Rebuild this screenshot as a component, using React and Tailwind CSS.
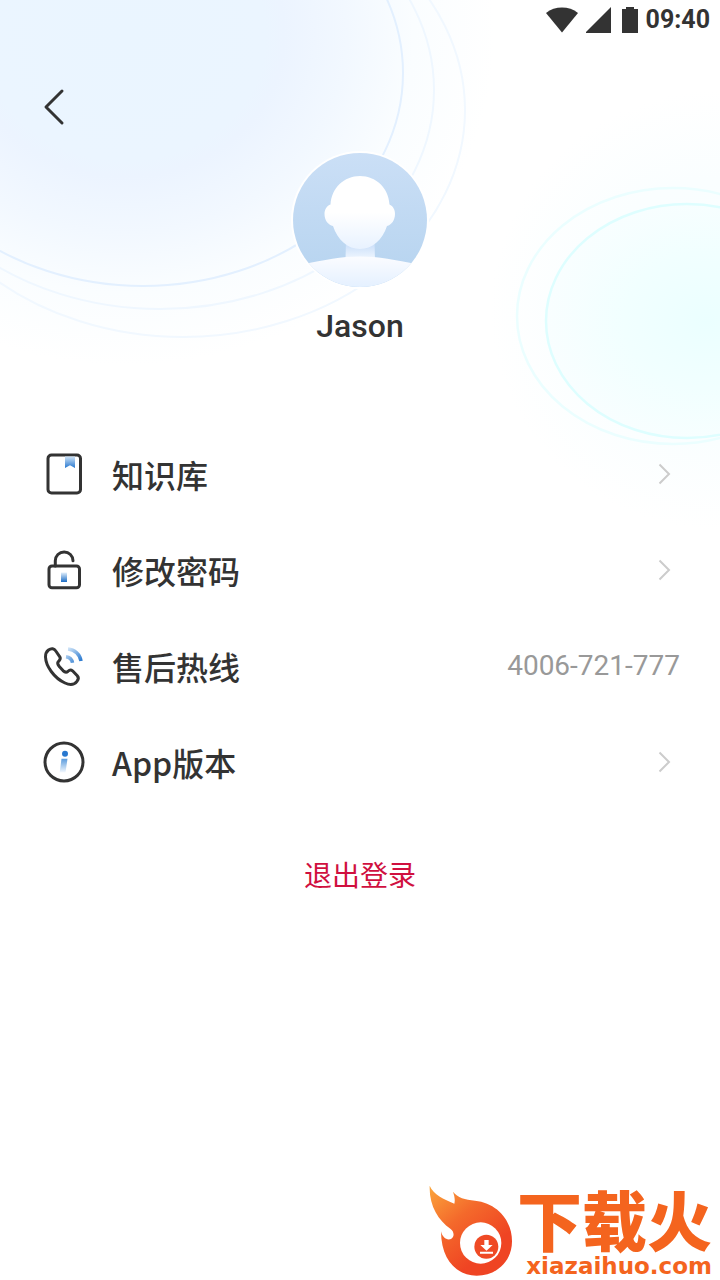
import { useId } from 'react';

function Backdrop() {
  return (
    <svg
      className="pointer-events-none absolute inset-x-0 top-0 -z-10 w-full"
      viewBox="0 0 720 620"
      fill="none"
      aria-hidden="true"
    >
      <defs>
        <radialGradient id="blueGlow">
          <stop offset="0" stopColor="#eaf5ff" />
          <stop offset="0.38" stopColor="#ebf5ff" />
          <stop offset="0.43" stopColor="#ecf4ff" />
          <stop offset="0.6" stopColor="#f2f8ff" />
          <stop offset="0.78" stopColor="#fafdff" />
          <stop offset="1" stopColor="#ffffff" />
        </radialGradient>
        <radialGradient id="cyanHaze">
          <stop offset="0" stopColor="#f8feff" />
          <stop offset="0.6" stopColor="#fafeff" />
          <stop offset="1" stopColor="#ffffff" />
        </radialGradient>
        <radialGradient id="cyanGlow" cx="0.57" cy="0.5" r="0.58">
          <stop offset="0" stopColor="#ebffff" />
          <stop offset="0.5" stopColor="#f1ffff" />
          <stop offset="1" stopColor="#f9feff" />
        </radialGradient>
      </defs>
      <ellipse cx="125" cy="35" rx="370" ry="330" fill="url(#blueGlow)" />
      <ellipse cx="143" cy="73" rx="260" ry="213" stroke="#e3f0ff" strokeWidth="2" />
      <ellipse cx="160" cy="90" rx="274" ry="219" stroke="#eff7ff" strokeWidth="2" />
      <ellipse cx="183" cy="110" rx="282" ry="227" stroke="#f1f8ff" strokeWidth="2" />
      <ellipse cx="720" cy="310" rx="230" ry="220" fill="url(#cyanHaze)" />
      <ellipse cx="673" cy="316" rx="156" ry="128" stroke="#ebfeff" strokeWidth="2.5" />
      <ellipse cx="687" cy="321" rx="141" ry="117" fill="url(#cyanGlow)" stroke="#defeff" strokeWidth="2.5" />
    </svg>
  );
}

function StatusBar() {
  return (
    <div className="flex h-10 items-center justify-end gap-2 pr-2.5 text-[#333333]">
      <svg width="32" height="26" viewBox="0 0 32 26" fill="currentColor" aria-hidden="true">
        <path d="M0 6C9 -1.3 23 -1.3 32 6L16 25.5Z" />
      </svg>
      <svg width="28" height="26" viewBox="0 0 28 26" fill="currentColor" aria-hidden="true">
        <path d="M25 0V26H-1Z" />
      </svg>
      <svg width="16" height="26" viewBox="0 0 16 26" fill="currentColor" aria-hidden="true">
        <path d="M4 0H12V2H16V26H0V2H4Z" />
      </svg>
      <span className="text-[25px] font-bold">09:40</span>
    </div>
  );
}

function Avatar() {
  return (
    <svg width="140" height="140" viewBox="0 0 140 140" role="img" aria-label="Jason">
      <defs>
        <linearGradient id="avatarBg" x1="0" y1="0" x2="0" y2="1">
          <stop offset="0" stopColor="#cbdff6" />
          <stop offset="1" stopColor="#b5d3ef" />
        </linearGradient>
        <linearGradient id="avatarHead" x1="0" y1="0" x2="0" y2="1">
          <stop offset="0.5" stopColor="#ffffff" />
          <stop offset="1" stopColor="#e8f2ff" />
        </linearGradient>
        <linearGradient id="avatarNeck" x1="0" y1="0" x2="0" y2="1">
          <stop offset="0.3" stopColor="#cfe2fa" />
          <stop offset="1" stopColor="#f2f8ff" />
        </linearGradient>
        <linearGradient id="avatarBody" x1="0" y1="0" x2="0" y2="1">
          <stop offset="0" stopColor="#fbfcff" />
          <stop offset="1" stopColor="#e2efff" />
        </linearGradient>
        <clipPath id="avatarClip">
          <circle cx="70" cy="70" r="67" />
        </clipPath>
      </defs>
      <circle cx="70" cy="70" r="69" fill="#ffffff" />
      <g clipPath="url(#avatarClip)">
        <rect width="140" height="140" fill="url(#avatarBg)" />
        <path d="M56 90H84.500L85 110H55.500Z" fill="url(#avatarNeck)" />
        <path d="M0 117C30 111 48 106.500 70 106.500C92 106.500 110 111 140 117V140H0Z" fill="url(#avatarBody)" />
        <path
          d="M40.500 54.500C41.500 38 54 26 70 26C86 26 98.500 38 99.500 54.500C103 56 105 59.500 105 64C105 70 101.500 75 97 76C92.500 90 82 99 70 99C58 99 47.500 90 43 76C38 75 34.500 70 34.500 64C34.500 59.500 37 55.500 40.500 54.500Z"
          fill="url(#avatarHead)"
        />
      </g>
    </svg>
  );
}

function IconFrame({ children }) {
  return (
    <svg
      className="shrink-0"
      width="48"
      height="48"
      viewBox="0 0 48 48"
      fill="none"
      stroke="#333333"
      strokeWidth="3"
      strokeLinecap="round"
      strokeLinejoin="round"
      aria-hidden="true"
    >
      {children}
    </svg>
  );
}

function Fade({ id, from = '#cfe4f8', to = '#2878cf' }) {
  return (
    <defs>
      <linearGradient id={id} x1="0" y1="0" x2="0" y2="1">
        <stop offset="0" stopColor={from} />
        <stop offset="1" stopColor={to} />
      </linearGradient>
    </defs>
  );
}

function BookIcon() {
  const id = useId();
  return (
    <IconFrame>
      <Fade id={id} />
      <rect x="8" y="5" width="32.500" height="38" rx="3.500" />
      <path d="M25 6.500H35V18L30 15.200L25 18Z" fill={`url(#${id})`} stroke="none" />
    </IconFrame>
  );
}

function LockIcon() {
  const id = useId();
  return (
    <IconFrame>
      <Fade id={id} from="#e2effb" to="#1b6cc4" />
      <path d="M15.300 20V14.800A8.850 8.850 0 0 1 33 14.800" />
      <rect x="9" y="20" width="30.500" height="21.800" rx="3" />
      <rect x="21" y="26.500" width="6" height="9.500" fill={`url(#${id})`} stroke="none" />
    </IconFrame>
  );
}

function PhoneIcon() {
  const id = useId();
  return (
    <IconFrame>
      <defs>
        <linearGradient id={id} gradientUnits="userSpaceOnUse" x1="28" y1="6" x2="40" y2="20">
          <stop offset="0" stopColor="#d3e6f8" />
          <stop offset="1" stopColor="#2878cf" />
        </linearGradient>
      </defs>
      <path d="M8.500 8C11.500 5.800 14.200 6.500 15.800 9L19.800 14.800C21.300 17.300 19.500 18.300 18.200 19.700C16.800 21.500 18 23 19.500 24.800L23 28.600C25 30.600 26.500 30.600 28 29.300C29.500 27.800 31 27.500 32.500 28.800L37.300 33.800C38.800 35.500 38.500 37.500 37 39.300C34.500 42.500 30 43.300 25 41C14 36 5.800 24 5.500 15C5.400 12 6.500 9.500 8.500 8Z" />
      <path d="M28 7A14 14 0 0 1 41 19" stroke={`url(#${id})`} strokeWidth="3.5" strokeLinecap="butt" />
      <path d="M26 14.700A7.500 7.500 0 0 1 32.500 20.800" stroke={`url(#${id})`} strokeWidth="3.5" strokeLinecap="butt" />
    </IconFrame>
  );
}

function InfoIcon() {
  const id = useId();
  return (
    <IconFrame>
      <Fade id={id} from="#5a9bdd" to="#f4f9fe" />
      <circle cx="24" cy="24" r="19" />
      <circle cx="25" cy="15.800" r="3" fill="#2878cf" stroke="none" />
      <path d="M21.500 20.700H27.500L25.500 34.500H19.700Z" fill={`url(#${id})`} stroke="none" />
    </IconFrame>
  );
}

function ChevronRight() {
  return (
    <svg width="32" height="32" viewBox="0 0 32 32" fill="none" stroke="#cccccc" strokeWidth="2" aria-hidden="true">
      <path d="M11.500 6.500L21 16L11.500 25.500" />
    </svg>
  );
}

const menu = [
  { label: '知识库', Icon: BookIcon },
  { label: '修改密码', Icon: LockIcon },
  { label: '售后热线', Icon: PhoneIcon, value: '4006-721-777' },
  { label: 'App版本', Icon: InfoIcon },
];

function MenuRow({ label, Icon, value }) {
  return (
    <li>
      <button type="button" className="flex h-24 w-full items-center gap-6 px-10 text-left">
        <Icon />
        <span className="flex-1 font-['Noto_Sans_CJK_SC',sans-serif] text-[32px] leading-10 font-medium">{label}</span>
        {value ? <span className="text-[28px] text-[#999999]">{value}</span> : <ChevronRight />}
      </button>
    </li>
  );
}

function SiteMark() {
  return (
    <div className="flex items-end justify-end gap-1 pr-2 pb-1 font-['Noto_Sans_CJK_SC',sans-serif] text-[#f4641e]">
      <svg width="84" height="91" viewBox="22 16 252 273" aria-hidden="true">
        <defs>
          <linearGradient id="flame" x1="0" y1="0" x2="0.6" y2="0.8">
            <stop offset="0" stopColor="#fba63c" />
            <stop offset="0.5" stopColor="#f4692b" />
            <stop offset="1" stopColor="#ef4423" />
          </linearGradient>
        </defs>
        <path
          d="M24 18C36 46 66 58 98 72C101 60 98 48 94 36C108 54 130 60 160 63C225 70 271 120 271 185C271 245 225 288 165 288C105 288 58 240 58 155C62 174 76 183 88 178C100 172 97 154 86 147C50 122 22 78 24 18Z"
          fill="url(#flame)"
        />
        <circle cx="177" cy="190" r="62" fill="#ffffff" />
        <circle cx="194" cy="201" r="36" fill="#ef4a25" />
        <path d="M188 181H201V196H213L194.500 213L176 196H188ZM175 216H214V222H175Z" fill="#ffffff" />
      </svg>
      <div className="flex flex-col items-end">
        <span className="text-[65px] leading-[76px] font-black">下载火</span>
        <span className="font-['DejaVu_Sans',sans-serif] text-[23px] leading-5 font-bold">xiazaihuo.com</span>
      </div>
    </div>
  );
}

export default function App() {
  return (
    <div className="relative isolate flex min-h-screen flex-col bg-white font-['Roboto','Noto_Sans_CJK_SC',sans-serif] text-[#333333]">
      <Backdrop />
      <StatusBar />

      <header className="flex h-[110px] items-start px-8 pt-11">
        <button type="button" aria-label="返回" className="flex size-11 items-center justify-center">
          <svg width="44" height="44" viewBox="0 0 44 44" fill="none" stroke="#333333" strokeWidth="3" strokeLinecap="round" strokeLinejoin="round">
            <path d="M30 7L14 23L30 39" />
          </svg>
        </button>
      </header>

      <main className="flex flex-col">
        <div className="flex flex-col items-center gap-4">
          <Avatar />
          <h1 className="text-[32px] leading-10 font-medium">Jason</h1>
        </div>

        <ul className="mt-20">
          {menu.map((item) => (
            <MenuRow key={item.label} {...item} />
          ))}
        </ul>

        <button
          type="button"
          className="mx-auto mt-8 h-16 px-10 font-['Noto_Sans_CJK_SC',sans-serif] text-[28px] text-[#d0103f]"
        >
          退出登录
        </button>
      </main>

      <footer className="mt-auto">
        <SiteMark />
      </footer>
    </div>
  );
}
